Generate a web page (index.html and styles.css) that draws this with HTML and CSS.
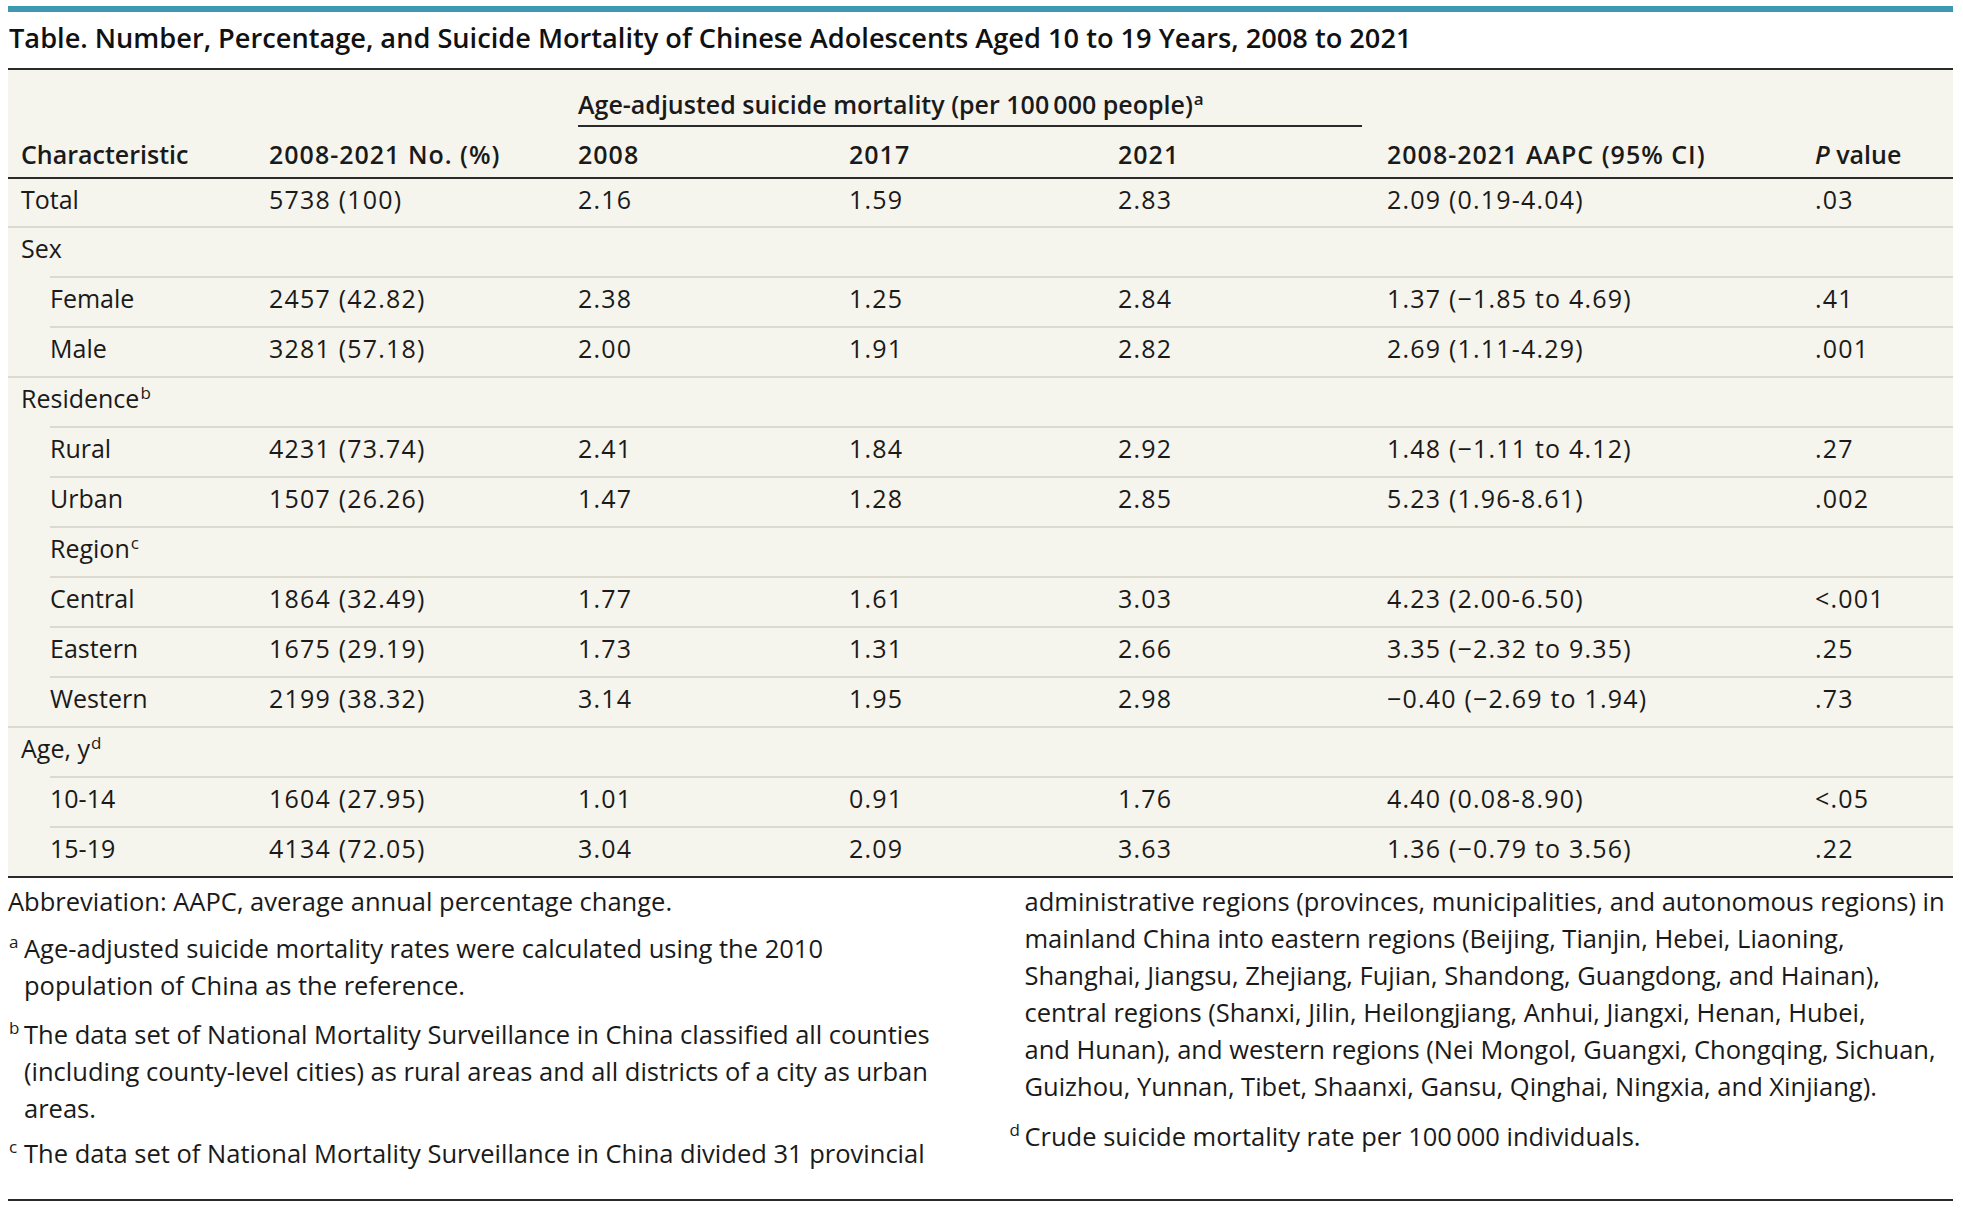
FILE: index.html
```html
<!DOCTYPE html>
<html lang="en">
<head>
<meta charset="utf-8">
<title>Table</title>
<link rel="stylesheet" href="styles.css">
</head>
<body>
<div class="page">
  <div class="topbar"></div>
  <h1 class="title">Table. Number, Percentage, and Suicide Mortality of Chinese Adolescents Aged 10 to 19 Years, 2008 to 2021</h1>
  <table class="data">
    <colgroup>
      <col class="c1"><col class="c2"><col class="c3"><col class="c4"><col class="c5"><col class="c6"><col class="c7">
    </colgroup>
    <thead>
      <tr class="h1">
        <th></th><th></th>
        <th colspan="3" class="span"><div class="span-label">Age-adjusted suicide mortality (per 100&#8201;000 people)<sup>a</sup></div></th>
        <th></th><th></th>
      </tr>
      <tr class="h2">
        <th>Characteristic</th><th class="num">2008-2021 No. (%)</th><th class="num">2008</th><th class="num">2017</th><th class="num">2021</th><th class="num">2008-2021 AAPC (95% CI)</th><th><i>P</i> value</th>
      </tr>
    </thead>
    <tbody>
      <tr class="first"><td>Total</td><td>5738 (100)</td><td>2.16</td><td>1.59</td><td>2.83</td><td>2.09 (0.19-4.04)</td><td>.03</td></tr>
      <tr><td>Sex</td><td></td><td></td><td></td><td></td><td></td><td></td></tr>
      <tr class="sub"><td>Female</td><td>2457 (42.82)</td><td>2.38</td><td>1.25</td><td>2.84</td><td>1.37 (−1.85 to 4.69)</td><td>.41</td></tr>
      <tr class="sub"><td>Male</td><td>3281 (57.18)</td><td>2.00</td><td>1.91</td><td>2.82</td><td>2.69 (1.11-4.29)</td><td>.001</td></tr>
      <tr><td>Residence<sup>b</sup></td><td></td><td></td><td></td><td></td><td></td><td></td></tr>
      <tr class="sub"><td>Rural</td><td>4231 (73.74)</td><td>2.41</td><td>1.84</td><td>2.92</td><td>1.48 (−1.11 to 4.12)</td><td>.27</td></tr>
      <tr class="sub"><td>Urban</td><td>1507 (26.26)</td><td>1.47</td><td>1.28</td><td>2.85</td><td>5.23 (1.96-8.61)</td><td>.002</td></tr>
      <tr class="sub"><td>Region<sup>c</sup></td><td></td><td></td><td></td><td></td><td></td><td></td></tr>
      <tr class="sub"><td>Central</td><td>1864 (32.49)</td><td>1.77</td><td>1.61</td><td>3.03</td><td>4.23 (2.00-6.50)</td><td>&lt;.001</td></tr>
      <tr class="sub"><td>Eastern</td><td>1675 (29.19)</td><td>1.73</td><td>1.31</td><td>2.66</td><td>3.35 (−2.32 to 9.35)</td><td>.25</td></tr>
      <tr class="sub"><td>Western</td><td>2199 (38.32)</td><td>3.14</td><td>1.95</td><td>2.98</td><td>−0.40 (−2.69 to 1.94)</td><td>.73</td></tr>
      <tr><td>Age, y<sup>d</sup></td><td></td><td></td><td></td><td></td><td></td><td></td></tr>
      <tr class="sub"><td>10-14</td><td>1604 (27.95)</td><td>1.01</td><td>0.91</td><td>1.76</td><td>4.40 (0.08-8.90)</td><td>&lt;.05</td></tr>
      <tr class="sub"><td>15-19</td><td>4134 (72.05)</td><td>3.04</td><td>2.09</td><td>3.63</td><td>1.36 (−0.79 to 3.56)</td><td>.22</td></tr>
    </tbody>
  </table>
  <div class="notes-wrap">
    <div class="notes">
      <p class="fn plain">Abbreviation: AAPC, average annual percentage change.</p>
      <p class="fn fa"><span class="mark">a</span>Age-adjusted suicide mortality rates were calculated using the 2010<br>population of China as the reference.</p>
      <p class="fn fb"><span class="mark">b</span>The data set of National Mortality Surveillance in China classified all counties<br>(including county-level cities) as rural areas and all districts of a city as urban<br>areas.</p>
      <p class="fn fc"><span class="mark">c</span>The data set of National Mortality Surveillance in China divided 31 provincial<br>administrative regions (provinces, municipalities, and autonomous regions) in<br>mainland China into eastern regions (Beijing, Tianjin, Hebei, Liaoning,<br>Shanghai, Jiangsu, Zhejiang, Fujian, Shandong, Guangdong, and Hainan),<br>central regions (Shanxi, Jilin, Heilongjiang, Anhui, Jiangxi, Henan, Hubei,<br>and Hunan), and western regions (Nei Mongol, Guangxi, Chongqing, Sichuan,<br>Guizhou, Yunnan, Tibet, Shaanxi, Gansu, Qinghai, Ningxia, and Xinjiang).</p>
      <p class="fn"><span class="mark">d</span>Crude suicide mortality rate per 100&#8201;000 individuals.</p>
    </div>
  </div>
</div>
</body>
</html>
```

FILE: styles.css
```css
* { box-sizing: border-box; }

html, body {
  margin: 0;
  padding: 0;
  background: #ffffff;
}

body {
  font-family: "Open Sans", "Noto Sans", "Liberation Sans", sans-serif;
  font-size: 25px;
  color: #1a1a1a;
}

.page {
  width: 1945px;
  margin-left: 8px;
}

.topbar {
  height: 6px;
  margin-top: 6px;
  background: #3d98b2;
}

.title {
  margin: 11px 0 15px 1px;
  font-size: 27.2px;
  line-height: 30px;
  font-weight: 600;
  color: #111111;
}

sup {
  font-size: 0.68em;
  line-height: 0;
  vertical-align: 0.55em;
  margin-left: 1px;
}

.data {
  width: 1945px;
  table-layout: fixed;
  border-collapse: separate;
  border-spacing: 0;
  background: #f5f4ed;
  border-top: 2px solid #2a2a2a;
  border-bottom: 2px solid #2a2a2a;
}

.c1 { width: 252px; }
.c2 { width: 309px; }
.c3 { width: 271px; }
.c4 { width: 269px; }
.c5 { width: 269px; }
.c6 { width: 428px; }
.c7 { width: 147px; }

.data th {
  text-align: left;
  font-weight: 600;
  line-height: 30px;
  padding: 0 0 0 9px;
  white-space: nowrap;
}

.data th.num {
  letter-spacing: 1px;
}

.h1 th {
  vertical-align: bottom;
  padding: 0;
}

.h1 th.span {
  padding: 0 16px 0 9px;
}

.span-label {
  padding: 19px 0 6px;
  border-bottom: 2px solid #2a2a2a;
}

.h2 th {
  padding: 12px 0 8px 9px;
  border-bottom: 2px solid #2a2a2a;
  vertical-align: bottom;
}

.h2 th:first-child {
  padding-left: 13px;
}

.data td {
  line-height: 30px;
  padding: 5px 0 13px 9px;
  border-top: 2px solid #dcd9ce;
  white-space: nowrap;
  vertical-align: top;
}

.data td:first-child {
  padding-left: 13px;
}

.data td + td {
  letter-spacing: 1.2px;
}

.data tr.first td {
  border-top: 0;
  padding-bottom: 12px;
}

.data tr.sub td:first-child {
  padding-left: 42px;
  border-top-color: transparent;
  background-image: linear-gradient(#dcd9ce, #dcd9ce);
  background-repeat: no-repeat;
  background-origin: border-box;
  background-clip: border-box;
  background-position: 42px 0;
  background-size: 100% 2px;
}

.notes-wrap {
  border-bottom: 2px solid #2a2a2a;
}

.notes {
  height: 321px;
  padding-top: 5px;
  column-count: 2;
  column-gap: 56px;
  column-fill: auto;
  font-size: 25.5px;
}

.fn {
  margin: 0 0 10px;
  padding-left: 16px;
  text-indent: -16px;
  line-height: 37px;
  white-space: nowrap;
  orphans: 1;
  widows: 1;
}

.fn.fa { margin-bottom: 12px; }
.fn.fb { margin-bottom: 8px; }
.fn.fc { margin-bottom: 13px; }

.fn.plain {
  padding-left: 0;
  text-indent: 0;
}

.mark {
  display: inline-block;
  width: 16px;
  text-indent: 0;
  font-size: 17px;
  line-height: 0;
  vertical-align: 10px;
  padding-left: 1px;
}
```
